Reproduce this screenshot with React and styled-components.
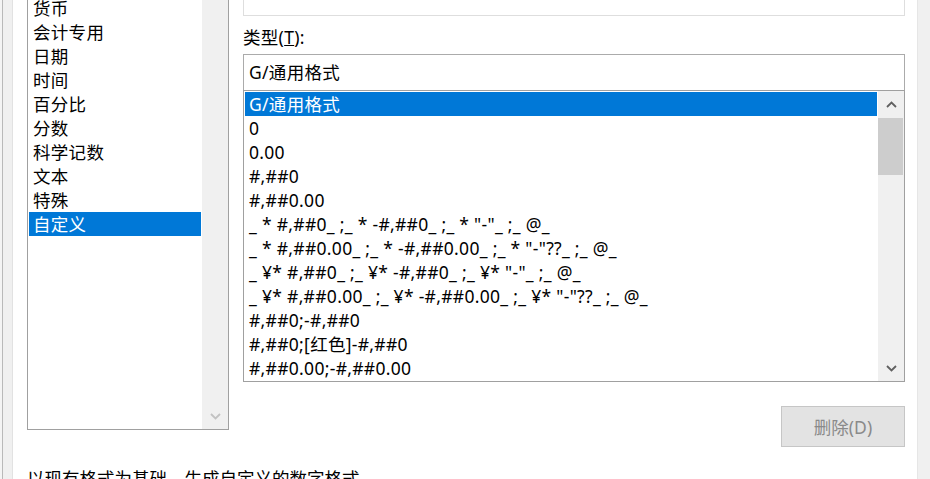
import React from "react";
import styled, { createGlobalStyle } from "styled-components";

const categories = [
  "常规",
  "数值",
  "货币",
  "会计专用",
  "日期",
  "时间",
  "百分比",
  "分数",
  "科学记数",
  "文本",
  "特殊",
  "自定义",
];

const formats = [
  "G/通用格式",
  "0",
  "0.00",
  "#,##0",
  "#,##0.00",
  '_ * #,##0_ ;_ * -#,##0_ ;_ * "-"_ ;_ @_ ',
  '_ * #,##0.00_ ;_ * -#,##0.00_ ;_ * "-"??_ ;_ @_ ',
  '_ ¥* #,##0_ ;_ ¥* -#,##0_ ;_ ¥* "-"_ ;_ @_ ',
  '_ ¥* #,##0.00_ ;_ ¥* -#,##0.00_ ;_ ¥* "-"??_ ;_ @_ ',
  "#,##0;-#,##0",
  "#,##0;[红色]-#,##0",
  "#,##0.00;-#,##0.00",
];

const Chevron = ({ up }) => (
  <svg width="11" height="7" viewBox="0 0 11 7">
    <path
      d={up ? "M1 6 L5.5 1.5 L10 6" : "M1 1 L5.5 5.5 L10 1"}
      fill="none"
      stroke="currentColor"
      strokeWidth="1.8"
    />
  </svg>
);

const App = () => {
  return (
    <Window>
      <GlobalStyle />
      <LeftEdge />
      <Dialog>
        <Columns>
          <ListBox $width={202} $height={484}>
            <Items>
              {categories.map((name) => (
                <Item key={name} $selected={name === "自定义"}>
                  {name}
                </Item>
              ))}
            </Items>
            <Scrollbar>
              <ScrollButton $disabled>
                <Chevron up />
              </ScrollButton>
              <ScrollButton $disabled>
                <Chevron />
              </ScrollButton>
            </Scrollbar>
          </ListBox>

          <RightCol>
            <SampleBox />
            <Label>
              类型(<u>T</u>):
            </Label>
            <TypeInput>G/通用格式</TypeInput>
            <ListBox $height={292}>
              <Items>
                {formats.map((f, i) => (
                  <Item key={f} $selected={i === 0}>
                    {f}
                  </Item>
                ))}
              </Items>
              <Scrollbar>
                <ScrollButton>
                  <Chevron up />
                </ScrollButton>
                <Thumb />
                <ScrollButton>
                  <Chevron />
                </ScrollButton>
              </Scrollbar>
            </ListBox>
            <DeleteButton disabled>删除(D)</DeleteButton>
          </RightCol>
        </Columns>
        <Hint>以现有格式为基础，生成自定义的数字格式。</Hint>
      </Dialog>
      <RightEdge />
    </Window>
  );
};

export default App;

const GlobalStyle = createGlobalStyle`
  html, body {
    margin: 0;
    padding: 0;
    background: #fff;
  }
  body {
    font-family: "Noto Sans", "Noto Sans CJK SC", sans-serif;
    color: #000;
  }
`;

const Window = styled.div`
  display: flex;
  width: 930px;
  height: 479px;
  overflow: hidden;
  background: #fff;
`;

const LeftEdge = styled.div`
  flex: 0 0 13px;
  background: linear-gradient(
    to right,
    #f4f4f4 0 2px,
    #b9b9b9 2px 3px,
    #f0f0f0 3px 12px,
    #e2e2e2 12px 13px
  );
`;

const RightEdge = styled.div`
  flex: 0 0 13px;
  background: linear-gradient(to right, #e6e6e6 0 1px, #f0f0f0 1px);
`;

const Dialog = styled.div`
  flex: 1;
  display: flex;
  flex-direction: column;
  margin-top: -54px;
  padding: 0 12px 0 14px;
`;

const Columns = styled.div`
  display: flex;
  align-items: flex-start;
  gap: 14px;
`;

const RightCol = styled.div`
  flex: 1;
  display: flex;
  flex-direction: column;
`;

const ListBox = styled.div`
  display: flex;
  box-sizing: border-box;
  width: ${(p) => (p.$width ? `${p.$width}px` : "100%")};
  height: ${(p) => p.$height}px;
  border: 1px solid #a0a0a0;
  background: #fff;
`;

const Items = styled.div`
  flex: 1;
  padding: 1px;
  overflow: hidden;
`;

const Item = styled.div`
  height: 24px;
  line-height: 24px;
  padding-left: 4px;
  font-size: 17.5px;
  letter-spacing: 0.3px;
  white-space: pre;
  background: ${(p) => (p.$selected ? "#0078d7" : "transparent")};
  color: ${(p) => (p.$selected ? "#fff" : "#000")};
`;

const Scrollbar = styled.div`
  flex: 0 0 26px;
  display: flex;
  flex-direction: column;
  justify-content: space-between;
  background: #f0f0f0;
`;

const ScrollButton = styled.div`
  height: 26px;
  display: flex;
  align-items: center;
  justify-content: center;
  color: ${(p) => (p.$disabled ? "#c2c2c2" : "#606060")};
`;

const Thumb = styled.div`
  height: 57px;
  margin: 1px 1px 0 0;
  margin-bottom: auto;
  background: #cdcdcd;
`;

const SampleBox = styled.div`
  height: 70px;
  box-sizing: border-box;
  border: 1px solid #dedede;
`;

const Label = styled.div`
  margin: 9px 0 5px;
  height: 24px;
  line-height: 24px;
  font-size: 17.5px;
  letter-spacing: 0.3px;
`;

const TypeInput = styled.div`
  height: 36px;
  box-sizing: border-box;
  padding-left: 5px;
  line-height: 35px;
  font-size: 17.5px;
  letter-spacing: 0.3px;
  border: 1px solid #ababab;
  border-bottom: none;
`;

const DeleteButton = styled.button`
  align-self: flex-end;
  margin-top: 24px;
  width: 124px;
  height: 41px;
  border: 1px solid #c6c6c6;
  background: #e3e3e3;
  color: #8a8a8a;
  font-family: inherit;
  font-size: 17.5px;
  padding: 0;
`;

const Hint = styled.div`
  margin-top: 19px;
  line-height: 24px;
  font-size: 17.5px;
  white-space: nowrap;
`;
